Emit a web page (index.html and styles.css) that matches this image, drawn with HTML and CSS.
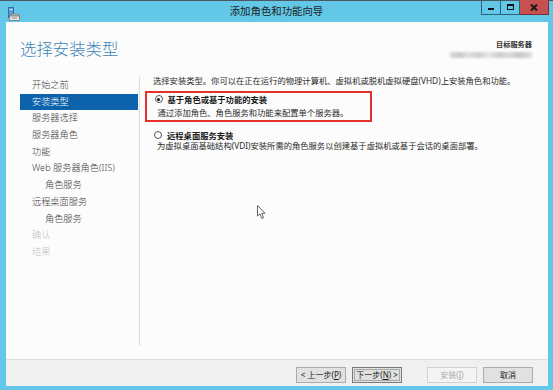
FILE: index.html
```html
<!DOCTYPE html>
<html lang="zh-CN">
<head>
    <meta charset="UTF-8">
    <title>添加角色和功能向导</title>
    <link rel="stylesheet" href="styles.css">
</head>
<body>
    <div class="window">
        <div class="titlebar">
            <div class="tb-left">
                <svg class="app-icon" width="12" height="14" viewBox="0 0 12 14">
                    <rect x="0.5" y="0.5" width="5" height="10" fill="#5d9fd6" stroke="#2f6ea8"/>
                    <rect x="1.5" y="2" width="3" height="1" fill="#dceaf7"/>
                    <path d="M2 9 L4 7 L10 7 L11.5 9 Z" fill="#c9c9c9" stroke="#777" stroke-width="0.7"/>
                    <rect x="1.5" y="9" width="10" height="4.5" fill="#e6e6e6" stroke="#777" stroke-width="0.8"/>
                    <rect x="4" y="10.5" width="5" height="1.2" fill="#999"/>
                </svg>
            </div>
            <div class="tb-title">添加角色和功能向导</div>
            <div class="tb-right">
                <div class="wbtn wbtn-min"><span class="glyph-min"></span></div>
                <div class="wbtn wbtn-max"><span class="glyph-max"></span></div>
                <div class="wbtn wbtn-close">
                    <svg width="8" height="7" viewBox="0 0 8 7"><path d="M1 0.5 L7 6.5 M7 0.5 L1 6.5" stroke="#1a1a1a" stroke-width="2"/></svg>
                </div>
            </div>
        </div>

        <div class="frame">
            <div class="client">
                <div class="main">
                    <div class="header">
                        <h1>选择安装类型</h1>
                        <div class="target">
                            <div class="target-label">目标服务器</div>
                            <div class="target-name"></div>
                        </div>
                    </div>

                    <div class="body">
                        <ul class="nav">
                            <li>开始之前</li>
                            <li class="active">安装类型</li>
                            <li>服务器选择</li>
                            <li>服务器角色</li>
                            <li>功能</li>
                            <li>Web 服务器角色(IIS)</li>
                            <li class="sub">角色服务</li>
                            <li>远程桌面服务</li>
                            <li class="sub">角色服务</li>
                            <li class="disabled">确认</li>
                            <li class="disabled">结果</li>
                        </ul>

                        <div class="content">
                            <p class="intro">选择安装类型。你可以在正在运行的物理计算机、虚拟机或脱机虚拟硬盘(VHD)上安装角色和功能。</p>

                            <div class="option highlighted">
                                <div class="option-row">
                                    <span class="radio checked"></span>
                                    <span class="option-title">基于角色或基于功能的安装</span>
                                </div>
                                <div class="option-desc first">通过添加角色、角色服务和功能来配置单个服务器。</div>
                            </div>

                            <div class="option">
                                <div class="option-row">
                                    <span class="radio"></span>
                                    <span class="option-title">远程桌面服务安装</span>
                                </div>
                                <div class="option-desc">为虚拟桌面基础结构(VDI)安装所需的角色服务以创建基于虚拟机或基于会话的桌面部署。</div>
                            </div>
                        </div>
                    </div>
                </div>

                <div class="footer">
                    <div class="btn">&lt; 上一步(<u>P</u>)</div>
                    <div class="btn focused">下一步(<u>N</u>) &gt;</div>
                    <div class="btn disabled gap">安装(<u>I</u>)</div>
                    <div class="btn">取消</div>
                </div>
            </div>
        </div>

        <svg class="cursor" width="9" height="15" viewBox="0 0 9 15">
            <path d="M0.5 0.5 L0.5 11 L3 8.8 L4.8 13.5 L6.5 12.8 L4.8 8.3 L8 8.3 Z" fill="#fff" stroke="#555" stroke-width="0.9" stroke-linejoin="round"/>
        </svg>
    </div>
</body>
</html>
```

FILE: styles.css
```css
body {
    margin: 0;
    padding: 0;
    background-color: #63c8e7;
    font-family: "Noto Sans", "Noto Sans CJK SC", sans-serif;
    color: #1e1e1e;
    overflow: hidden;
}

.window {
    position: relative;
    width: 553px;
    height: 390px;
    display: flex;
    flex-direction: column;
    background-color: #63c8e7;
}

/* title bar */
.titlebar {
    height: 22px;
    box-sizing: border-box;
    border-top: 1px solid #4b5a60;
    display: grid;
    grid-template-columns: 1fr auto 1fr;
}

.tb-left {
    padding: 3px 0 0 8px;
}

.tb-title {
    font-size: 10.4px;
    line-height: 20px;
    color: #1d1d1d;
}

.tb-right {
    display: flex;
    justify-content: flex-end;
    align-items: flex-start;
    padding-right: 4px;
}

.wbtn {
    height: 15px;
    box-sizing: border-box;
    border: 1px solid #2e6276;
    border-top: none;
    display: flex;
    align-items: center;
    justify-content: center;
    margin-top: -1px;
}

.wbtn + .wbtn {
    border-left: none;
}

.wbtn-min {
    width: 20px;
}

.wbtn-max {
    width: 19px;
}

.wbtn-close {
    width: 29px;
    background-color: #c75050;
    border-color: #7e3030;
}

.glyph-min {
    width: 6px;
    height: 2px;
    background-color: #111;
    margin-top: 4px;
}

.glyph-max {
    width: 5px;
    height: 3px;
    border: 1.5px solid #111;
    border-top-width: 2.5px;
}

/* frame */
.frame {
    flex: 1;
    display: flex;
    padding: 0 5px 4px 6px;
    min-height: 0;
}

.client {
    flex: 1;
    display: flex;
    flex-direction: column;
    background-color: #fcfcfc;
}

.main {
    flex: 1;
    display: flex;
    flex-direction: column;
    padding: 17px 16px 13px 14px;
    min-height: 0;
}

.header {
    height: 20px;
    display: flex;
    justify-content: space-between;
    align-items: flex-start;
}

h1 {
    margin: 0;
    font-size: 16.4px;
    line-height: 20px;
    font-weight: 300;
    color: #3c84b6;
}

.target {
    display: flex;
    flex-direction: column;
    align-items: flex-end;
    padding-top: 1px;
}

.target-label {
    font-size: 7.2px;
    line-height: 9px;
    font-weight: bold;
    color: #333;
}

.target-name {
    margin-top: 3px;
    width: 82px;
    height: 6px;
    background: linear-gradient(90deg, #dadada 0%, #c8c8c8 12%, #dedede 22%, #cfcfcf 35%, #e6e6e6 48%, #cbcbcb 60%, #dcdcdc 72%, #c6c6c6 85%, #e0e0e0 100%);
    filter: blur(0.8px);
}

/* body */
.body {
    flex: 1;
    display: flex;
    margin-top: 18px;
    min-height: 0;
}

.nav {
    list-style: none;
    margin: 0;
    padding: 0 1px 0 0;
    width: 118px;
    border-right: 1px solid #dadada;
    font-size: 9.2px;
    font-weight: 300;
    color: #444;
}

.nav li {
    height: 16.7px;
    line-height: 16.7px;
    padding-left: 12px;
    white-space: nowrap;
}

.nav li.sub {
    padding-left: 25px;
}

.nav li.active {
    background-color: #0d63ab;
    color: #fff;
}

.nav li.disabled {
    color: #c4c4c4;
}

.content {
    flex: 1;
    padding-left: 13px;
    font-size: 8.3px;
    color: #2a2a2a;
}

.intro {
    margin: -1px 0 0 0;
    line-height: 10px;
    white-space: nowrap;
}

.option {
    width: 215px;
    margin: 6px 0 0 -8px;
    padding: 1px 0 2px 8px;
    border: 1.5px solid transparent;
    white-space: nowrap;
}

.option.highlighted {
    border: 2px solid #e5302d;
    margin-top: 5px;
    padding-left: 7.5px;
}

.option-row {
    display: flex;
    align-items: center;
    height: 10px;
}

.radio {
    width: 6px;
    height: 6px;
    border: 1px solid #555;
    border-radius: 50%;
    background-color: #fff;
    display: flex;
    align-items: center;
    justify-content: center;
    margin-right: 5px;
    flex-shrink: 0;
}

.radio.checked::after {
    content: "";
    width: 3px;
    height: 3px;
    border-radius: 50%;
    background-color: #111;
}

.option-title {
    font-weight: bold;
    color: #1a1a1a;
}

.option-desc {
    line-height: 10px;
    padding-left: 3px;
    margin-top: 1px;
}

.option-desc.first {
    margin-top: 4px;
}

/* footer */
.footer {
    height: 27px;
    box-sizing: border-box;
    border-top: 1px solid #dfdfdf;
    background-color: #f0f0f0;
    display: flex;
    justify-content: flex-end;
    align-items: flex-start;
    gap: 6px;
    padding: 7px 15px 0 0;
}

.btn {
    width: 50px;
    height: 16px;
    box-sizing: border-box;
    border: 1px solid #acacac;
    background-color: #e1e1e1;
    font-size: 8px;
    line-height: 14px;
    text-align: center;
    color: #1a1a1a;
}

.btn u {
    text-decoration: underline;
}

.btn.focused {
    border-color: #7a7a7a;
    box-shadow: inset 0 0 0 1px #e1e1e1, inset 0 0 0 2px #a8a8a8;
}

.btn.disabled {
    background-color: #f4f4f4;
    border-color: #d2d2d2;
    color: #a8a8a8;
}

.btn.gap {
    margin-left: 19px;
}

.cursor {
    position: absolute;
    left: 257px;
    top: 205px;
}
```
